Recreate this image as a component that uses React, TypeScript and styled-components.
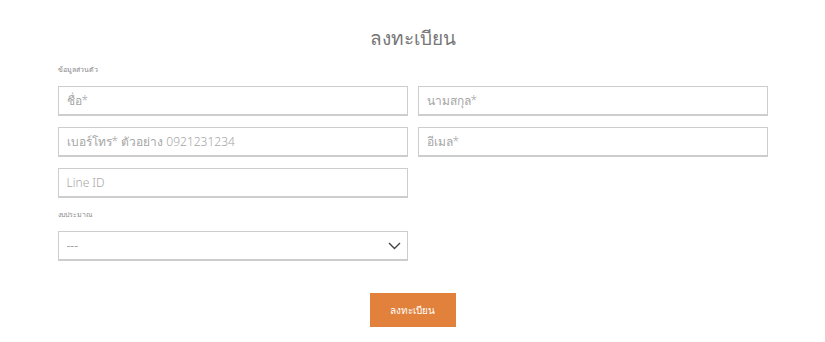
import styled, { createGlobalStyle } from "styled-components"

const GlobalStyle = createGlobalStyle`
  body {
    margin: 0;
    background: #fff;
    font-family: "Noto Sans", "DejaVu Sans", sans-serif;
  }
`

const Page = styled.div`
  width: 710px;
  margin: 0 auto;
  padding-top: 23px;
`

const Title = styled.h1`
  margin: 0;
  text-align: center;
  font-size: 19px;
  font-weight: 300;
  color: #777;
  line-height: 30px;
`

const SectionLabel = styled.div`
  font-size: 7px;
  color: #888;
  line-height: 10px;
  margin-top: 12px;
  margin-bottom: 11px;
`

const Grid = styled.div`
  display: grid;
  grid-template-columns: 350px 350px;
  column-gap: 10px;
  row-gap: 11px;
`

const Field = styled.input`
  box-sizing: border-box;
  width: 100%;
  height: 30px;
  border: 1px solid #cdcdcd;
  border-bottom-width: 2px;
  padding: 0 8px;
  font-family: inherit;
  font-size: 12px;
  font-weight: 300;
  color: #555;
  outline: none;
  &::placeholder {
    color: #a6a6a6;
  }
`

const SelectWrap = styled.div`
  position: relative;
  width: 350px;
`

const Select = styled.select`
  box-sizing: border-box;
  appearance: none;
  width: 100%;
  height: 30px;
  border: 1px solid #cdcdcd;
  border-bottom-width: 2px;
  background: #fff;
  padding: 0 8px;
  font-family: inherit;
  font-size: 12px;
  color: #a6a6a6;
  outline: none;
`

const Chevron = styled.svg`
  position: absolute;
  right: 7px;
  top: 11px;
  pointer-events: none;
`

const Actions = styled.div`
  display: flex;
  justify-content: center;
  margin-top: 32px;
`

const Submit = styled.button`
  width: 86px;
  height: 34px;
  border: none;
  background: #e2813c;
  color: #fff;
  font-family: inherit;
  font-size: 10px;
  font-weight: 300;
  cursor: pointer;
`

export default function App() {
  return (
    <>
      <GlobalStyle />
      <Page>
        <Title>ลงทะเบียน</Title>
        <SectionLabel>ข้อมูลส่วนตัว</SectionLabel>
        <Grid>
          <Field placeholder="ชื่อ*" />
          <Field placeholder="นามสกุล*" />
          <Field placeholder="เบอร์โทร* ตัวอย่าง 0921231234" />
          <Field placeholder="อีเมล*" />
          <Field placeholder="Line ID" />
        </Grid>
        <SectionLabel>งบประมาณ</SectionLabel>
        <SelectWrap>
          <Select defaultValue="">
            <option value="">---</option>
          </Select>
          <Chevron width="13" height="8" viewBox="0 0 13 8">
            <path d="M1 1l5.5 5.5L12 1" fill="none" stroke="#444" strokeWidth="1.4" />
          </Chevron>
        </SelectWrap>
        <Actions>
          <Submit>ลงทะเบียน</Submit>
        </Actions>
      </Page>
    </>
  )
}
